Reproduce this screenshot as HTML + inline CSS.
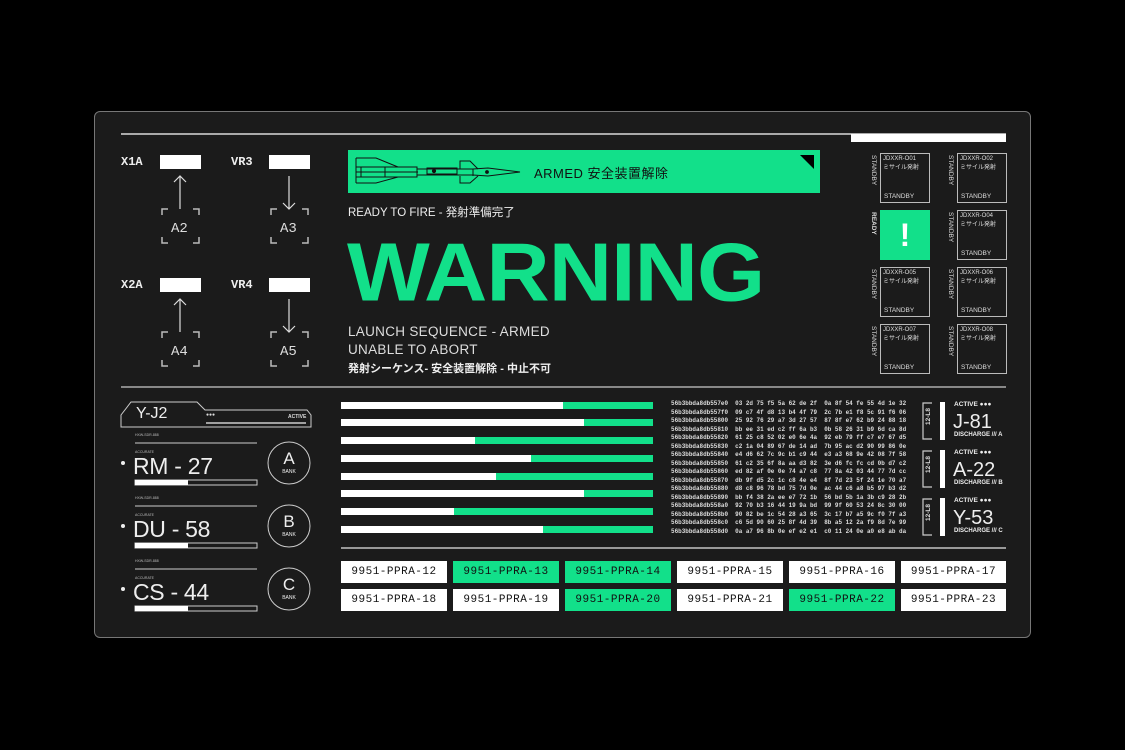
<!DOCTYPE html><html><head><meta charset="utf-8"><style>
*{margin:0;padding:0;box-sizing:border-box}
body{width:1125px;height:750px;background:#000;position:relative;overflow:hidden;font-family:"Liberation Sans","Noto Sans CJK JP",sans-serif;color:#eee}
.a{position:absolute}
.p{position:absolute;left:94px;top:111px;width:937px;height:527px;background:#1b1b1b;border:1px solid #777;border-radius:6px}
.m{font-family:"Liberation Mono","Noto Sans CJK JP",monospace}
.lbl{font-weight:bold;font-size:12px;color:#eee}
.wb{background:#fff;height:14px;width:41px}
.g{background:#12e08a}
.bar{position:absolute;left:341px;width:312px;height:7px;background:#fff}
.bar b{position:absolute;right:0;top:0;height:7px;background:#12e08a}
.hx{position:absolute;left:671px;top:400px;font:bold 5.95px/8.5px "Liberation Mono",monospace;color:#ddd;white-space:pre}
.bx{position:absolute;width:106px;height:22px;background:#fff;color:#111;font:11px/22px "Liberation Mono",monospace;text-align:center;letter-spacing:.5px}
.bx.gr{background:#12e08a}
.card{position:absolute;width:50px;height:50px;border:1.5px solid #bbb;font-size:6px;padding:2px;color:#ddd}
.card .s{position:absolute;bottom:2px;left:3px;font-size:6.5px}
.vt{position:absolute;writing-mode:vertical-rl;font-size:6.5px;color:#ddd}
.big{position:absolute;left:119px;font-size:23px;color:#eee;line-height:26px;letter-spacing:-.3px}
</style></head><body>
<div class="p"></div>
<div class="a" style="left:121px;top:133px;width:885px;height:2px;background:#aaa"></div>
<div class="a" style="left:851px;top:134px;width:155px;height:8px;background:#fff"></div>
<div class="a" style="left:121px;top:386px;width:885px;height:2px;background:#888"></div>

<div class="a lbl m" style="left:121px;top:155px">X1A</div><div class="a wb" style="left:160px;top:155px"></div>
<div class="a lbl m" style="left:231px;top:155px">VR3</div><div class="a wb" style="left:269px;top:155px"></div>
<div class="a lbl m" style="left:121px;top:278px">X2A</div><div class="a wb" style="left:160px;top:278px"></div>
<div class="a lbl m" style="left:231px;top:278px">VR4</div><div class="a wb" style="left:269px;top:278px"></div>
<svg class="a" style="left:0;top:0" width="400" height="400" fill="none" stroke="#ddd" stroke-width="1.2">
<path d="M180 209V176M174 182l6-6 6 6M289 176V209M283 203l6 6 6-6M180 332V299M174 305l6-6 6 6M289 299V332M283 326l6 6 6-6"/>
<g stroke="#bbb" stroke-width="1.5">
<path d="M162 215v-6h6M193 209h6v6M162 237v6h6M193 243h6v-6"/>
<path d="M271 215v-6h6M302 209h6v6M271 237v6h6M302 243h6v-6"/>
<path d="M162 338v-6h6M193 332h6v6M162 360v6h6M193 366h6v-6"/>
<path d="M271 338v-6h6M302 332h6v6M271 360v6h6M302 366h6v-6"/>
</g>
<g fill="#ddd" stroke="none" font-family="Liberation Mono" font-size="14">
<text x="171" y="232">A2</text><text x="280" y="232">A3</text><text x="171" y="355">A4</text><text x="280" y="355">A5</text></g>
</svg>

<div class="a g" style="left:348px;top:150px;width:472px;height:43px"></div>
<svg class="a" style="left:348px;top:150px" width="472" height="43" fill="none" stroke="#111" stroke-width="1">
<path d="M8 17h61v10H8z"/><path d="M8 22h62"/>
<path d="M8 8h20l22 9M8 33h20l22-6M8 8v25"/>
<path d="M13 17v10M37 17v10"/>
<path d="M69 19h56l15-1 32 4-32 4-15-1H69"/>
<path d="M79 18h30v6H79z"/>
<path d="M112 19v-8h10l8 8M112 26v7h10l8-7M125 19v7"/>
<circle cx="86" cy="21" r="1.6" fill="#111"/><circle cx="139" cy="22" r="1.4" fill="#111"/>
<path d="M452 5h14v14z" fill="#000" stroke="none"/>
</svg>
<div class="a" style="left:534px;top:163px;font-size:13px;color:#111;letter-spacing:.5px">ARMED 安全装置解除</div>
<div class="a" style="left:348px;top:204px;font-size:11.5px;color:#eee">READY TO FIRE - 発射準備完了</div>
<div class="a" style="left:347px;top:230px;font-size:93px;font-weight:bold;color:#12e08a;line-height:95px;transform:scale(0.943,0.89);transform-origin:left top;letter-spacing:-1px">WARNING</div>
<div class="a" style="left:348px;top:323px;font-size:13.5px;line-height:18px;color:#ddd;letter-spacing:.3px">LAUNCH SEQUENCE - ARMED<br>UNABLE TO ABORT</div>
<div class="a" style="left:348px;top:360px;font-size:11px;font-weight:bold;color:#eee">発射シーケンス- 安全装置解除 - 中止不可</div>

<div class="card" style="left:880px;top:153px">JDXXR-O01<br>ミサイル発射<span class="s">STANDBY</span></div>
<div class="card" style="left:957px;top:153px">JDXXR-O02<br>ミサイル発射<span class="s">STANDBY</span></div>
<div class="a g" style="left:880px;top:210px;width:50px;height:50px;color:#fff;font-size:32px;font-weight:bold;text-align:center;line-height:50px">!</div>
<div class="card" style="left:957px;top:210px">JDXXR-O04<br>ミサイル発射<span class="s">STANDBY</span></div>
<div class="card" style="left:880px;top:267px">JDXXR-O05<br>ミサイル発射<span class="s">STANDBY</span></div>
<div class="card" style="left:957px;top:267px">JDXXR-O06<br>ミサイル発射<span class="s">STANDBY</span></div>
<div class="card" style="left:880px;top:324px">JDXXR-O07<br>ミサイル発射<span class="s">STANDBY</span></div>
<div class="card" style="left:957px;top:324px">JDXXR-O08<br>ミサイル発射<span class="s">STANDBY</span></div>
<div class="vt" style="left:870px;top:155px">STANDBY</div><div class="vt" style="left:947px;top:155px">STANDBY</div>
<div class="vt" style="left:870px;top:212px;font-weight:bold">READY</div><div class="vt" style="left:947px;top:212px">STANDBY</div>
<div class="vt" style="left:870px;top:269px">STANDBY</div><div class="vt" style="left:947px;top:269px">STANDBY</div>
<div class="vt" style="left:870px;top:326px">STANDBY</div><div class="vt" style="left:947px;top:326px">STANDBY</div>

<svg class="a" style="left:100px;top:395px" width="230" height="230" fill="none" stroke="#ccc" stroke-width="1">
<path d="M21 32V20l10-13h66l8 8h102l4 5v12z"/>
<path d="M106 28h100" stroke-width="1.5"/>
<path d="M35 48h122M35 111h122M35 174h122"/>
<rect x="35" y="85" width="122" height="5"/><rect x="35" y="148" width="122" height="5"/><rect x="35" y="211" width="122" height="5"/>
<circle cx="189" cy="68" r="21"/><circle cx="189" cy="131" r="21"/><circle cx="189" cy="194" r="21"/>
</svg>
<div class="a" style="left:135px;top:480px;width:53px;height:5px;background:#fff"></div>
<div class="a" style="left:135px;top:543px;width:53px;height:5px;background:#fff"></div>
<div class="a" style="left:135px;top:606px;width:53px;height:5px;background:#fff"></div>
<div class="a" style="left:136px;top:405px;font-size:16px;color:#eee">Y-J2</div>
<div class="a" style="left:206px;top:412px;font-size:5px;color:#ddd">●●●</div>
<div class="a" style="left:288px;top:414px;font-size:5px;color:#ddd;font-weight:bold">ACTIVE</div>
<div class="a" style="left:135px;top:433px;font-size:3.5px;color:#bbb">HXW-SDR-888</div>
<div class="a" style="left:135px;top:496px;font-size:3.5px;color:#bbb">HXW-SDR-888</div>
<div class="a" style="left:135px;top:559px;font-size:3.5px;color:#bbb">HXW-SDR-888</div>
<div class="a" style="left:135px;top:450px;font-size:3.5px;color:#bbb">ACCURATE</div>
<div class="a" style="left:135px;top:513px;font-size:3.5px;color:#bbb">ACCURATE</div>
<div class="a" style="left:135px;top:576px;font-size:3.5px;color:#bbb">ACCURATE</div>
<div class="a" style="left:121px;top:461px;width:4px;height:4px;background:#eee;border-radius:50%"></div>
<div class="a" style="left:121px;top:524px;width:4px;height:4px;background:#eee;border-radius:50%"></div>
<div class="a" style="left:121px;top:587px;width:4px;height:4px;background:#eee;border-radius:50%"></div>
<div class="big" style="left:133px;top:453px">RM - 27</div>
<div class="big" style="left:133px;top:516px">DU - 58</div>
<div class="big" style="left:133px;top:579px">CS - 44</div>
<div class="a" style="left:278px;top:450px;width:22px;text-align:center;font-size:17px;line-height:18px">A<div style="font-size:5px;line-height:8px">BANK</div></div>
<div class="a" style="left:278px;top:513px;width:22px;text-align:center;font-size:17px;line-height:18px">B<div style="font-size:5px;line-height:8px">BANK</div></div>
<div class="a" style="left:278px;top:576px;width:22px;text-align:center;font-size:17px;line-height:18px">C<div style="font-size:5px;line-height:8px">BANK</div></div>

<div class="bar" style="top:402px"><b style="left:222px"></b></div>
<div class="bar" style="top:419px"><b style="left:243px"></b></div>
<div class="bar" style="top:437px"><b style="left:134px"></b></div>
<div class="bar" style="top:455px"><b style="left:190px"></b></div>
<div class="bar" style="top:473px"><b style="left:155px"></b></div>
<div class="bar" style="top:490px"><b style="left:243px"></b></div>
<div class="bar" style="top:508px"><b style="left:113px"></b></div>
<div class="bar" style="top:526px"><b style="left:202px"></b></div>
<div class="a" style="left:341px;top:547px;width:665px;height:1.5px;background:#999"></div>

<div class="hx">56b3bbda8db557e0  03 2d 75 f5 5a 62 de 2f  0a 8f 54 fe 55 4d 1e 32
56b3bbda8db557f0  09 c7 4f d8 13 b4 4f 79  2c 7b e1 f8 5c 91 f6 06
56b3bbda8db55800  25 92 76 29 a7 3d 27 57  87 8f e7 62 b9 24 88 18
56b3bbda8db55810  bb ee 31 ed c2 ff 6a b3  0b 58 26 31 b9 6d ca 8d
56b3bbda8db55820  61 25 c8 52 02 e0 6e 4a  92 eb 79 ff c7 e7 67 d5
56b3bbda8db55830  c2 1a 04 89 67 de 14 ad  7b 95 ac d2 90 99 86 0e
56b3bbda8db55840  e4 d6 62 7c 9c b1 c9 44  e3 a3 68 9e 42 08 7f 58
56b3bbda8db55850  61 c2 35 6f 8a aa d3 82  3e d6 fc fc cd 0b d7 c2
56b3bbda8db55860  ed 82 af 0e 0e 74 a7 c8  77 8a 42 03 44 77 7d cc
56b3bbda8db55870  db 9f d5 2c 1c c8 4e e4  8f 7d 23 5f 24 1e 70 a7
56b3bbda8db55880  d8 c8 96 78 bd 75 7d 0e  ac 44 c6 a8 b5 97 b3 d2
56b3bbda8db55890  bb f4 38 2a ee e7 72 1b  56 bd 5b 1a 3b c9 28 2b
56b3bbda8db558a0  92 70 b3 16 44 19 9a bd  99 9f 60 53 24 8c 30 00
56b3bbda8db558b0  90 82 be 1c 54 28 a3 65  3c 17 b7 a5 9c f0 7f a3
56b3bbda8db558c0  c6 5d 90 60 25 8f 4d 39  8b a5 12 2a f9 8d 7e 99
56b3bbda8db558d0  0a a7 96 8b 0e ef e2 e1  c0 11 24 0e a0 e8 ab da</div>

<svg class="a" style="left:920px;top:400px" width="20" height="140" fill="none" stroke="#ccc" stroke-width="1.2">
<path d="M12 3H3v36h9M12 51H3v36h9M12 99H3v36h9"/></svg>
<div class="vt" style="left:925px;top:408px;font-weight:bold;transform:rotate(180deg)">12-L8</div>
<div class="vt" style="left:925px;top:456px;font-weight:bold;transform:rotate(180deg)">12-L8</div>
<div class="vt" style="left:925px;top:504px;font-weight:bold;transform:rotate(180deg)">12-L8</div>
<div class="a" style="left:940px;top:402px;width:5px;height:38px;background:#fff"></div>
<div class="a" style="left:940px;top:450px;width:5px;height:38px;background:#fff"></div>
<div class="a" style="left:940px;top:498px;width:5px;height:38px;background:#fff"></div>
<div class="a" style="left:954px;top:401px;font-size:6.5px;font-weight:bold">ACTIVE ●●●</div>
<div class="a" style="left:954px;top:449px;font-size:6.5px;font-weight:bold">ACTIVE ●●●</div>
<div class="a" style="left:954px;top:497px;font-size:6.5px;font-weight:bold">ACTIVE ●●●</div>
<div class="a" style="left:953px;top:411px;font-size:20px;line-height:22px">J-81</div>
<div class="a" style="left:953px;top:459px;font-size:20px;line-height:22px">A-22</div>
<div class="a" style="left:953px;top:507px;font-size:20px;line-height:22px">Y-53</div>
<div class="a" style="left:954px;top:432px;font-size:6px;font-weight:bold;white-space:nowrap">DISCHARGE /// A</div>
<div class="a" style="left:954px;top:480px;font-size:6px;font-weight:bold;white-space:nowrap">DISCHARGE /// B</div>
<div class="a" style="left:954px;top:528px;font-size:6px;font-weight:bold;white-space:nowrap">DISCHARGE /// C</div>

<div class="bx" style="left:341px;top:561px">9951-PPRA-12</div>
<div class="bx gr" style="left:453px;top:561px">9951-PPRA-13</div>
<div class="bx gr" style="left:565px;top:561px">9951-PPRA-14</div>
<div class="bx" style="left:677px;top:561px">9951-PPRA-15</div>
<div class="bx" style="left:789px;top:561px">9951-PPRA-16</div>
<div class="bx" style="left:901px;top:561px;width:105px">9951-PPRA-17</div>
<div class="bx" style="left:341px;top:589px">9951-PPRA-18</div>
<div class="bx" style="left:453px;top:589px">9951-PPRA-19</div>
<div class="bx gr" style="left:565px;top:589px">9951-PPRA-20</div>
<div class="bx" style="left:677px;top:589px">9951-PPRA-21</div>
<div class="bx gr" style="left:789px;top:589px">9951-PPRA-22</div>
<div class="bx" style="left:901px;top:589px;width:105px">9951-PPRA-23</div>
</body></html>
